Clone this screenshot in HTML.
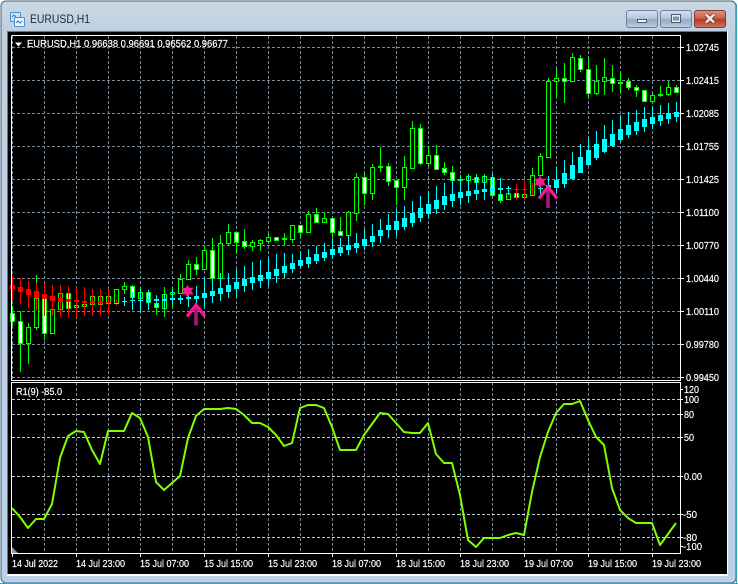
<!DOCTYPE html>
<html><head><meta charset="utf-8"><style>
html,body{margin:0;padding:0;background:#fff}
#w{position:relative;width:738px;height:584px;overflow:hidden;background:#fff}
svg{position:absolute;left:0;top:0;display:block}
text{font-family:"Liberation Sans",sans-serif;font-size:10px;fill:#fff;stroke:#fff;stroke-width:.18px}
</style></head><body><div id="w">
<svg width="738" height="584" viewBox="0 0 738 584" xmlns="http://www.w3.org/2000/svg">
<defs>
<linearGradient id="tb" x1="0" y1="0" x2="0" y2="1"><stop offset="0" stop-color="#cbd8e4"/><stop offset=".06" stop-color="#bccfe2"/><stop offset="1" stop-color="#b9d1ea"/></linearGradient>
<linearGradient id="bt" x1="0" y1="0" x2="0" y2="1"><stop offset="0" stop-color="#d6e2ee"/><stop offset=".45" stop-color="#b4c8dc"/><stop offset=".55" stop-color="#92aac4"/><stop offset="1" stop-color="#b8cfe4"/></linearGradient>
<linearGradient id="cl" x1="0" y1="0" x2="0" y2="1"><stop offset="0" stop-color="#dc9284"/><stop offset=".45" stop-color="#c8604e"/><stop offset=".55" stop-color="#b53a28"/><stop offset="1" stop-color="#cf7a5e"/></linearGradient>
</defs>
<rect x="0" y="0" width="738" height="584" fill="#fff"/>
<rect x="1" y="1" width="735" height="582" rx="5" fill="url(#tb)" stroke="#4a6070"/>
<path d="M0 583.5H738M736.5 4V584" stroke="#2fa6c0" fill="none"/>
<rect x="7" y="31" width="721" height="545" fill="#fff"/>
<rect x="7" y="31" width="720" height="543" fill="#000"/>
<path d="M7.5 31V574M7 31.5H727" stroke="#69737e" fill="none"/>

<!-- window title -->
<g>
<rect x="10.5" y="12.5" width="10" height="9" rx="1" fill="#cfe3f6" stroke="#4f8fd0"/>
<rect x="14.5" y="17.5" width="10" height="9" rx="1" fill="#eaf3fb" stroke="#4f8fd0"/>
<path d="M12 17l2-2 2 2M16 23l2-2 2 2 2-2" stroke="#3a78c0" fill="none"/>
</g>
<text x="30" y="23" style="font-size:12px;fill:#1e2a36;stroke:none" textLength="60" lengthAdjust="spacingAndGlyphs">EURUSD,H1</text>
<rect x="626.5" y="10.5" width="31" height="17" rx="2.5" fill="url(#bt)" stroke="#6d8196"/>
<rect x="660.5" y="10.5" width="31" height="17" rx="2.5" fill="url(#bt)" stroke="#6d8196"/>
<rect x="694.5" y="10.5" width="31" height="17" rx="2.5" fill="url(#cl)" stroke="#7c3a30"/>
<rect x="637.5" y="19.5" width="9" height="3" fill="#f4f6f8" stroke="#4c5a68"/>
<rect x="671.5" y="14.5" width="9" height="8" fill="#e8eef4" stroke="#4c5a68"/>
<rect x="673.5" y="17" width="5" height="3" fill="#8ea6bd" stroke="#4c5a68" stroke-width=".6"/>
<path d="M706 14.5l8 8M714 14.5l-8 8" stroke="#5a2a24" stroke-width="4"/>
<path d="M706 14.5l8 8M714 14.5l-8 8" stroke="#f2e8e4" stroke-width="2.6"/>

<!-- grid -->
<g stroke="#778899" fill="none" stroke-dasharray="3 2" shape-rendering="crispEdges">
<path d="M12.5 36V380M44.5 36V380M76.5 36V380M108.5 36V380M140.5 36V380M172.5 36V380M204.5 36V380M236.5 36V380M268.5 36V380M300.5 36V380M332.5 36V380M364.5 36V380M396.5 36V380M428.5 36V380M460.5 36V380M492.5 36V380M524.5 36V380M556.5 36V380M588.5 36V380M620.5 36V380M652.5 36V380"/>
<path d="M44.5 383V553M76.5 383V553M108.5 383V553M140.5 383V553M172.5 383V553M204.5 383V553M236.5 383V553M268.5 383V553M300.5 383V553M332.5 383V553M364.5 383V553M396.5 383V553M428.5 383V553M460.5 383V553M492.5 383V553M524.5 383V553M556.5 383V553M588.5 383V553M620.5 383V553M652.5 383V553"/>
<path d="M12 47.5H680M12 80.5H680M12 113.5H680M12 146.5H680M12 179.5H680M12 212.5H680M12 245.5H680M12 278.5H680M12 311.5H680M12 344.5H680M12 377.5H680"/>
</g>
<g stroke="#c6cbd2" fill="none" stroke-dasharray="3 2" shape-rendering="crispEdges">
<path d="M12 399.5H680M12 414.5H680M12 437.5H680M12 476.5H680M12 514.5H680M12 537.5H680"/>
</g>

<!-- green candles -->
<g shape-rendering="crispEdges">
<path fill="none" stroke="#00ff00" d="M12.5 306V326M20.5 311V372M28.5 323V364M36.5 275V330M44.5 290V340M52.5 309V333M60.5 293V309M68.5 293V308M76.5 296V312M84.5 304V308M92.5 296V306M100.5 296V306M108.5 296V306M116.5 289V306M124.5 282V294M132.5 285V310M140.5 288V300M148.5 292V305M156.5 295V315M164.5 287V317M172.5 287V308M180.5 274V294M188.5 260V279M196.5 257V275M204.5 245V269M212.5 238V278M220.5 235V278M228.5 224V246M236.5 232V253M244.5 229V249M252.5 240V251M260.5 239V251M268.5 233V244M276.5 237V241M284.5 233V245M292.5 225V243M300.5 225V237M308.5 211V232M316.5 208V223M324.5 212V222M332.5 218V237M340.5 217V236M348.5 211V235M356.5 173V221M364.5 173V205M372.5 164V200M380.5 147V172M388.5 163V186M396.5 180V205M404.5 156V200M412.5 121V168M420.5 124V165M428.5 146V166M436.5 145V170M444.5 162V175M452.5 166V188M460.5 175V183M468.5 174V182M476.5 174V184M484.5 174V184M492.5 174V196M500.5 190V203M508.5 191V200M516.5 189V198M524.5 186V198M532.5 168V195M540.5 153V175M548.5 78V157M556.5 69V97M564.5 63V103M572.5 53V81M580.5 55V72M588.5 58V98M596.5 65V95M604.5 58V95M612.5 65V92M620.5 71V93M628.5 78V90M636.5 85V97M644.5 90V102M652.5 94V103M660.5 86V97M668.5 81V96M676.5 85V93"/>
<g transform="translate(0 .5)" stroke="#00ff00">
<path fill="#000" d="M26.5 327h4V343h-4zM34.5 298h4V327h-4zM50.5 309h4V333h-4zM58.5 293h4V309h-4zM74.5 305h4V307h-4zM82.5 304h4V306h-4zM90.5 296h4V304h-4zM98.5 296h4V304h-4zM106.5 296h4V303h-4zM114.5 289h4V303h-4zM122.5 286h4V289h-4zM138.5 292h4V298h-4zM162.5 294h4V308h-4zM170.5 292h4V294h-4zM178.5 279h4V293h-4zM186.5 264h4V279h-4zM202.5 250h4V269h-4zM218.5 243h4V278h-4zM226.5 232h4V243h-4zM250.5 242h4V246h-4zM258.5 240h4V243h-4zM266.5 237h4V241h-4zM282.5 238h4V239h-4zM290.5 225h4V239h-4zM306.5 214h4V232h-4zM322.5 218h4V222h-4zM346.5 212h4V235h-4zM354.5 177h4V213h-4zM370.5 167h4V193h-4zM378.5 166h4V167h-4zM402.5 167h4V187h-4zM410.5 128h4V168h-4zM426.5 155h4V163h-4zM458.5 179h4V180h-4zM466.5 176h4V180h-4zM482.5 176h4V182h-4zM506.5 193h4V199h-4zM522.5 194h4V197h-4zM530.5 175h4V195h-4zM538.5 156h4V175h-4zM546.5 81h4V157h-4zM554.5 78h4V81h-4zM570.5 57h4V81h-4zM594.5 81h4V93h-4zM602.5 77h4V81h-4zM618.5 82h4V83h-4zM650.5 95h4V101h-4zM658.5 94h4V95h-4zM666.5 87h4V94h-4z"/>
<path fill="#fff" d="M10.5 313h4V321h-4zM18.5 321h4V343h-4zM42.5 295h4V333h-4zM66.5 293h4V308h-4zM130.5 286h4V297h-4zM146.5 292h4V302h-4zM154.5 303h4V307h-4zM194.5 264h4V269h-4zM210.5 250h4V278h-4zM234.5 232h4V242h-4zM242.5 241h4V246h-4zM274.5 237h4V240h-4zM298.5 225h4V232h-4zM314.5 214h4V222h-4zM330.5 218h4V232h-4zM338.5 231h4V235h-4zM362.5 177h4V193h-4zM386.5 166h4V181h-4zM394.5 180h4V187h-4zM418.5 128h4V163h-4zM434.5 155h4V169h-4zM442.5 168h4V172h-4zM450.5 172h4V180h-4zM474.5 177h4V182h-4zM490.5 177h4V195h-4zM498.5 194h4V200h-4zM514.5 193h4V197h-4zM562.5 78h4V81h-4zM578.5 58h4V69h-4zM586.5 69h4V93h-4zM610.5 78h4V83h-4zM626.5 81h4V87h-4zM634.5 87h4V90h-4zM642.5 90h4V101h-4zM674.5 87h4V92h-4z"/>
</g>

<!-- red -->
<path fill="none" stroke="#ff0000" d="M12.5 276V300M20.5 278V304M28.5 281V308M36.5 283V311M44.5 284V316M52.5 285V316M60.5 285V317M68.5 286V317M76.5 287V317M84.5 287V316M92.5 289V316M100.5 289V315M108.5 289V315M116.5 299V306M516.5 184V200M524.5 181V200M532.5 183V195"/>
<path fill="#ff0000" d="M10 285h5V289h-5zM18 287h5V292h-5zM26 289h5V295h-5zM34 291h5V298h-5zM42 294h5V299h-5zM50 296h5V301h-5zM58 298h5V302h-5zM66 299h5V302h-5zM74 300h5V302h-5zM82 301h5V303h-5zM90 301h5V303h-5zM98 301h5V303h-5zM106 302h5V303h-5zM114 303h5V304h-5zM514 189h5V190h-5zM522 189h5V190h-5zM530 189h5V190h-5z"/>

<!-- cyan -->
<path fill="none" stroke="#00ffff" d="M124.5 297V306M132.5 292V310M140.5 290V312M148.5 290V310M156.5 296V308M164.5 294V310M172.5 290V304M180.5 295V304M188.5 290V307M196.5 286V307M204.5 278V307M212.5 279V303M220.5 273V301M228.5 273V298M236.5 269V297M244.5 266V292M252.5 262V290M260.5 260V288M268.5 258V286M276.5 254V283M284.5 253V278M292.5 254V273M300.5 251V268M308.5 249V268M316.5 246V264M324.5 243V261M332.5 239V259M340.5 238V256M348.5 235V255M356.5 233V253M364.5 229V250M372.5 224V247M380.5 219V243M388.5 214V238M396.5 209V236M404.5 206V230M412.5 201V227M420.5 196V222M428.5 191V218M436.5 186V214M444.5 183V210M452.5 179V207M460.5 177V205M468.5 175V203M476.5 175V200M484.5 176V200M492.5 174V195M500.5 178V200M508.5 186V195M540.5 180V197M548.5 176V196M556.5 167V193M564.5 160V188M572.5 152V180M580.5 144V173M588.5 137V166M596.5 131V160M604.5 125V153M612.5 120V147M620.5 115V142M628.5 112V138M636.5 110V135M644.5 107V132M652.5 106V129M660.5 105V126M668.5 103V124M676.5 102V122"/>
<path fill="#00ffff" d="M114 303h5V304h-5zM122 301h5V302h-5zM130 300h5V301h-5zM138 300h5V301h-5zM146 299h5V301h-5zM154 299h5V301h-5zM162 299h5V301h-5zM170 298h5V300h-5zM178 298h5V300h-5zM186 297h5V299h-5zM194 296h5V299h-5zM202 293h5V298h-5zM210 291h5V296h-5zM218 288h5V294h-5zM226 285h5V292h-5zM234 282h5V289h-5zM242 279h5V286h-5zM250 277h5V283h-5zM258 275h5V281h-5zM266 272h5V279h-5zM274 269h5V276h-5zM282 266h5V273h-5zM290 263h5V269h-5zM298 260h5V266h-5zM306 257h5V264h-5zM314 254h5V261h-5zM322 252h5V258h-5zM330 249h5V255h-5zM338 247h5V253h-5zM346 245h5V250h-5zM354 243h5V248h-5zM362 239h5V246h-5zM370 236h5V242h-5zM378 230h5V236h-5zM386 225h5V230h-5zM394 221h5V230h-5zM402 218h5V227h-5zM410 213h5V223h-5zM418 208h5V218h-5zM426 204h5V214h-5zM434 200h5V209h-5zM442 196h5V205h-5zM450 194h5V201h-5zM458 192h5V198h-5zM466 191h5V196h-5zM474 190h5V194h-5zM482 189h5V192h-5zM490 188h5V191h-5zM498 188h5V190h-5zM506 188h5V189h-5zM538 188h5V189h-5zM546 185h5V190h-5zM554 180h5V188h-5zM562 173h5V184h-5zM570 165h5V179h-5zM578 157h5V173h-5zM586 150h5V165h-5zM594 144h5V158h-5zM602 139h5V152h-5zM610 134h5V146h-5zM618 129h5V140h-5zM626 125h5V135h-5zM634 122h5V131h-5zM642 119h5V127h-5zM650 117h5V124h-5zM658 115h5V121h-5zM666 113h5V119h-5zM674 112h5V117h-5z"/>
</g>

<!-- markers -->
<g fill="#ff1493">
<path d="M187.5 284.5l1.9 3.4 4.3-.5-2.4 3.6 2.4 3.6-4.3-.5-1.9 3.4-1.9-3.4-4.3.5 2.4-3.6-2.4-3.6 4.3.5z"/>
<path d="M540 175.5l1.9 3.4 4.3-.5-2.4 3.6 2.4 3.6-4.3-.5-1.9 3.4-1.9-3.4-4.3.5 2.4-3.6-2.4-3.6 4.3.5z"/>
</g>
<path d="M196 325.5V306" stroke="#a01880" stroke-width="3.6" fill="none"/>
<path d="M187 316.5L196 305 205 316.5" stroke="#ff1493" stroke-width="3.2" fill="none"/>
<path d="M548 208V189" stroke="#a01880" stroke-width="3.6" fill="none"/>
<path d="M539 198.5L548 187 557 198.5" stroke="#ff1493" stroke-width="3.2" fill="none"/>

<!-- indicator line -->
<polyline fill="none" stroke="#7fff00" stroke-width="2" stroke-linejoin="round" points="12,508 20,517 28,528 36,519 44,519 52,504 60,458 68,436 76,431 84,432 92,450 100,464 108,431 116,431 124,431 132,413 140,418 148,437 156,482 164,490 172,483 180,476 188,438 196,416 204,409 212,409 220,409 228,408 236,409 244,415 252,423 260,423 268,427 276,435 284,446 292,443 300,408 308,405 316,405 324,408 332,427 340,450 348,450 356,450 364,435 372,424 380,413 388,414 396,423 404,432 412,433 420,433 428,423 436,454 444,463 452,463 460,495 468,540 476,547 484,538 492,538 500,538 508,535 516,533 524,535 532,492 540,457 548,432 556,413 564,404 572,404 580,401 588,420 596,437 604,445 612,488 620,510 628,518 636,523 644,523 652,523 660,545 668,534 676,523"/>
<path d="M12 547L18 553H12z" fill="#8a96a4"/>

<!-- frames -->
<g fill="none" stroke="#fff" shape-rendering="crispEdges">
<path d="M11.5 36V380.5H680.5V35.5H11.5"/>
<path d="M11.5 382.5H680.5V553.5H11.5z"/>
<path d="M680 47.5h4M680 80.5h4M680 113.5h4M680 146.5h4M680 179.5h4M680 212.5h4M680 245.5h4M680 278.5h4M680 311.5h4M680 344.5h4M680 377.5h4"/>
<path d="M680 389.5h3M680 399.5h3M680 414.5h3M680 437.5h3M680 476.5h3M680 514.5h3M680 537.5h3M680 546.5h3"/>
<path d="M12.5 553v4M76.5 553v4M140.5 553v4M204.5 553v4M268.5 553v4M332.5 553v4M396.5 553v4M460.5 553v4M524.5 553v4M588.5 553v4M652.5 553v4"/>
</g>

<path d="M15 42.5h7l-3.5 4z" fill="#fff"/>
<text x="27" y="47" textLength="201" lengthAdjust="spacingAndGlyphs">EURUSD,H1  0.96638 0.96691 0.96562 0.96677</text>
<text x="16" y="395" textLength="46" lengthAdjust="spacingAndGlyphs">R1(9) -85.0</text>

<g>
<text x="686" y="51" textLength="33" lengthAdjust="spacingAndGlyphs">1.02745</text>
<text x="686" y="84" textLength="33" lengthAdjust="spacingAndGlyphs">1.02415</text>
<text x="686" y="117" textLength="33" lengthAdjust="spacingAndGlyphs">1.02085</text>
<text x="686" y="150" textLength="33" lengthAdjust="spacingAndGlyphs">1.01755</text>
<text x="686" y="183" textLength="33" lengthAdjust="spacingAndGlyphs">1.01425</text>
<text x="686" y="216" textLength="33" lengthAdjust="spacingAndGlyphs">1.01100</text>
<text x="686" y="249" textLength="33" lengthAdjust="spacingAndGlyphs">1.00770</text>
<text x="686" y="282" textLength="33" lengthAdjust="spacingAndGlyphs">1.00440</text>
<text x="686" y="315" textLength="33" lengthAdjust="spacingAndGlyphs">1.00110</text>
<text x="686" y="348" textLength="33" lengthAdjust="spacingAndGlyphs">0.99780</text>
<text x="686" y="381" textLength="33" lengthAdjust="spacingAndGlyphs">0.99450</text>
<text x="684" y="393" textLength="15" lengthAdjust="spacingAndGlyphs">120</text>
<text x="684" y="403" textLength="15" lengthAdjust="spacingAndGlyphs">100</text>
<text x="684" y="418" textLength="10" lengthAdjust="spacingAndGlyphs">80</text>
<text x="684" y="441" textLength="10" lengthAdjust="spacingAndGlyphs">50</text>
<text x="684" y="480" textLength="18" lengthAdjust="spacingAndGlyphs">0.00</text>
<text x="683" y="518" textLength="14" lengthAdjust="spacingAndGlyphs">-50</text>
<text x="683" y="541" textLength="14" lengthAdjust="spacingAndGlyphs">-80</text>
<text x="683" y="550" textLength="19" lengthAdjust="spacingAndGlyphs">-100</text>
</g>
<g>
<text x="12" y="567" textLength="46" lengthAdjust="spacingAndGlyphs">14 Jul 2022</text>
<text x="76" y="567" textLength="49" lengthAdjust="spacingAndGlyphs">14 Jul 23:00</text>
<text x="140" y="567" textLength="49" lengthAdjust="spacingAndGlyphs">15 Jul 07:00</text>
<text x="204" y="567" textLength="49" lengthAdjust="spacingAndGlyphs">15 Jul 15:00</text>
<text x="268" y="567" textLength="49" lengthAdjust="spacingAndGlyphs">15 Jul 23:00</text>
<text x="332" y="567" textLength="49" lengthAdjust="spacingAndGlyphs">18 Jul 07:00</text>
<text x="396" y="567" textLength="49" lengthAdjust="spacingAndGlyphs">18 Jul 15:00</text>
<text x="460" y="567" textLength="49" lengthAdjust="spacingAndGlyphs">18 Jul 23:00</text>
<text x="524" y="567" textLength="49" lengthAdjust="spacingAndGlyphs">19 Jul 07:00</text>
<text x="588" y="567" textLength="49" lengthAdjust="spacingAndGlyphs">19 Jul 15:00</text>
<text x="652" y="567" textLength="49" lengthAdjust="spacingAndGlyphs">19 Jul 23:00</text>
</g>
</svg>
</div></body></html>
